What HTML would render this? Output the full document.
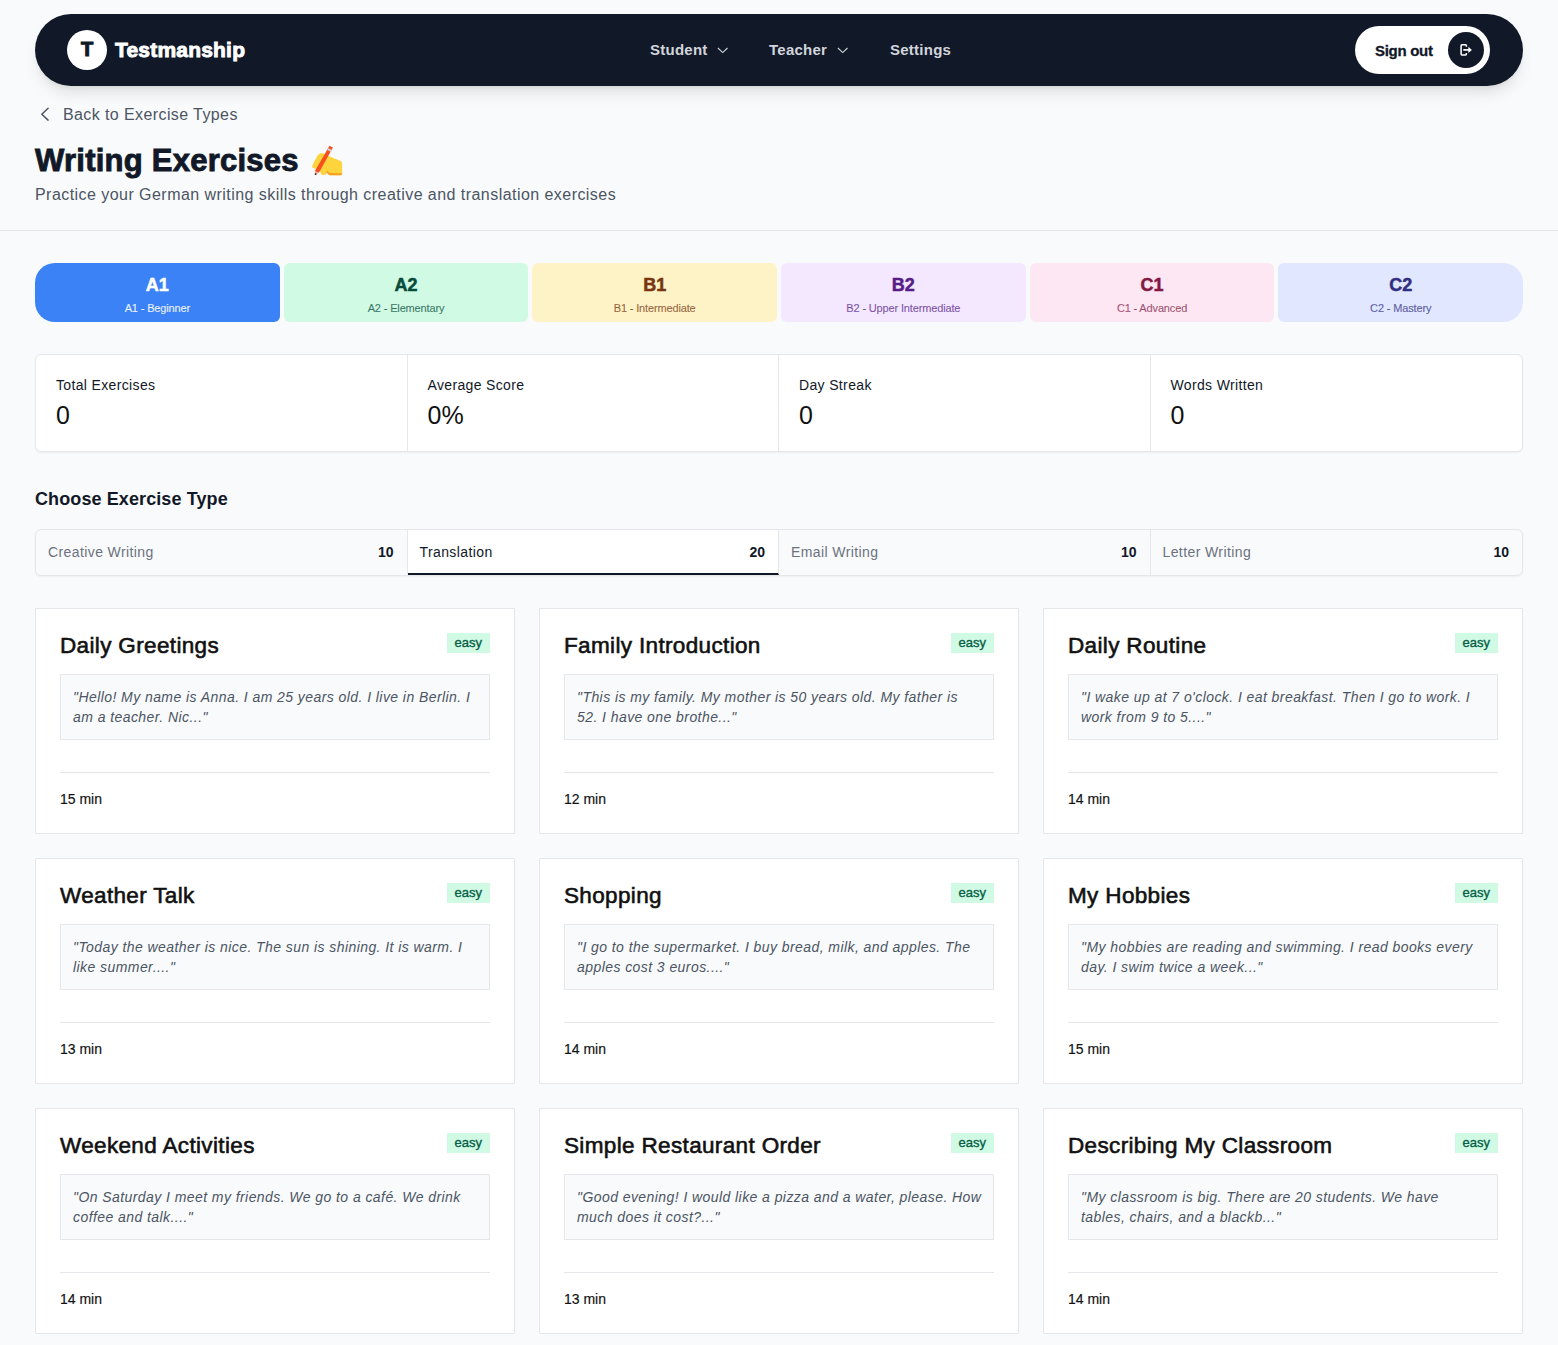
<!DOCTYPE html>
<html>
<head>
<meta charset="utf-8">
<style>
*{box-sizing:border-box;margin:0;padding:0}
html,body{width:1558px;height:1345px;overflow:hidden}
body{background:#f9fafb;font-family:"Liberation Sans",sans-serif;color:#111827;position:relative}
.abs{position:absolute}
/* nav */
.nav{position:absolute;left:35px;top:14px;width:1488px;height:72px;border-radius:36px;background:#111827;box-shadow:0 10px 15px -3px rgba(0,0,0,.1),0 4px 6px -4px rgba(0,0,0,.1)}
.logo{position:absolute;left:32px;top:16px;width:40px;height:40px;border-radius:50%;background:#fff}
.logo span{position:absolute;left:0;top:0;width:40px;line-height:38px;text-align:center;font-weight:700;font-size:20px;color:#111827;-webkit-text-stroke:1.1px #111827}
.brand{position:absolute;left:80px;top:0;line-height:72px;font-size:21px;font-weight:700;color:#fff;-webkit-text-stroke:.9px #fff;letter-spacing:.2px}
.nl{position:absolute;top:0;line-height:72px;font-size:15px;font-weight:700;color:#d1d5db;letter-spacing:.25px}
.chev{position:absolute;top:33px}
.signout{position:absolute;left:1320px;top:12px;width:135px;height:48px;border-radius:24px;background:#fff}
.signout .t{position:absolute;left:20px;top:1px;line-height:48px;font-size:15px;font-weight:700;color:#111827;letter-spacing:-.3px;-webkit-text-stroke:.3px #111827}
.signout .c{position:absolute;left:93px;top:6px;width:36px;height:36px;border-radius:50%;background:#111827}

.back{position:absolute;left:63px;top:105px;font-size:16px;line-height:20px;color:#4b5563;letter-spacing:.4px}
.h1{position:absolute;left:35px;top:141px;font-size:31px;line-height:40px;font-weight:700;color:#111827;letter-spacing:.25px;-webkit-text-stroke:.9px #111827}
.sub{position:absolute;left:35px;top:185px;font-size:16px;line-height:20px;color:#4b5563;letter-spacing:.45px}
.hr{position:absolute;left:0;top:230px;width:1558px;height:1px;background:#e5e7eb}
.lv{position:absolute;top:263px;height:59px;width:244.67px;border-radius:6px;text-align:center}
.lv .a{position:absolute;left:0;right:0;top:11px;font-size:18px;line-height:22px;font-weight:700;-webkit-text-stroke:.5px currentColor}
.lv .b{position:absolute;left:0;right:0;top:301px;font-size:11px;line-height:14px;font-weight:400;letter-spacing:-.15px;-webkit-text-stroke:.2px currentColor}
.stats{position:absolute;left:35px;top:354px;width:1488px;height:98px;background:#fff;border:1px solid #e5e7eb;border-radius:6px;box-shadow:0 1px 2px rgba(0,0,0,.05)}
.st{position:absolute;top:0;height:96px;width:371.5px;border-right:1px solid #e5e7eb}.st:last-child{border-right:0}
.st .l{position:absolute;left:20px;top:22px;font-size:14px;line-height:16px;color:#111827;letter-spacing:.35px}
.st .v{position:absolute;left:20px;top:45px;font-size:25px;line-height:30px;color:#111}
.h2{position:absolute;left:35px;top:488px;font-size:18px;line-height:22px;font-weight:700;color:#111827;letter-spacing:.1px}
.tabs{position:absolute;left:35px;top:529px;width:1488px;height:47px;background:#f9fafb;border:1px solid #e5e7eb;border-radius:6px;overflow:hidden;box-shadow:0 1px 2px rgba(0,0,0,.05)}
.tb{position:absolute;top:0;height:45px;width:371.5px;border-right:1px solid #e5e7eb}.tb:last-child{border-right:0}
.tb .l{position:absolute;left:12px;top:14px;font-size:14px;line-height:16px;color:#6b7280;letter-spacing:.4px}
.tb .n{position:absolute;right:13px;top:14px;font-size:14px;line-height:16px;font-weight:700;color:#111827}
.card{position:absolute;width:480px;height:226px;background:#fff;border:1px solid #e5e7eb}
.card .t{position:absolute;left:24px;top:22px;font-size:22.5px;line-height:29px;font-weight:400;color:#111;letter-spacing:.35px;-webkit-text-stroke:.6px #111}
.card .bd{position:absolute;right:24px;top:24px;height:20px;padding:0 8px;line-height:20px;font-size:13px;color:#065f46;background:#d1fae5;-webkit-text-stroke:.35px #065f46}
.card .q{position:absolute;left:24px;top:65px;width:430px;height:66px;background:#f9fafb;border:1px solid #e5e7eb;padding:12px 12px;font-size:14px;line-height:20px;font-style:italic;color:#4b5563;letter-spacing:.43px;white-space:nowrap}
.card .hrx{position:absolute;left:24px;top:163px;width:430px;height:1px;background:#e5e7eb}
.card .m{position:absolute;left:24px;top:182px;font-size:14px;line-height:16px;color:#111;-webkit-text-stroke:.15px #111}
</style>
</head>
<body>
<div class="nav">
  <div class="logo"><span>T</span></div>
  <div class="brand">Testmanship</div>
  <div class="nl" style="left:615px">Student</div>
  <svg class="chev" style="left:682px" width="12" height="8" viewBox="0 0 12 8"><path d="M0.9 1L5.7 5.6L10.5 1" fill="none" stroke="#d1d5db" stroke-width="1.1"/></svg>
  <div class="nl" style="left:734px">Teacher</div>
  <svg class="chev" style="left:802px" width="12" height="8" viewBox="0 0 12 8"><path d="M0.9 1L5.7 5.6L10.5 1" fill="none" stroke="#d1d5db" stroke-width="1.1"/></svg>
  <div class="nl" style="left:855px">Settings</div>
  <div class="signout"><div class="t">Sign out</div><div class="c"><svg style="position:absolute;left:11px;top:11px" width="14" height="14" viewBox="0 0 14 14"><path d="M7.4 3.8V2.7Q7.4 1.8 6.5 1.8H3Q2.1 1.8 2.1 2.7V11.1Q2.1 12 3 12H6.5Q7.4 12 7.4 11.1V10" fill="none" stroke="#fff" stroke-width="1.55"/><path d="M4.3 6.9H10" stroke="#fff" stroke-width="1.7"/><path d="M9.3 3.8L12.9 6.9L9.3 10Z" fill="#fff"/></svg></div></div>
</div>

<svg class="abs" style="left:38px;top:104px" width="14" height="20" viewBox="0 0 14 20"><path d="M10.1 4.3L3.8 10.2L10.1 16.1" fill="none" stroke="#4b5563" stroke-width="1.5" stroke-linecap="round" stroke-linejoin="round"/></svg>
<div class="back">Back to Exercise Types</div>
<div class="h1">Writing Exercises</div>
<div class="sub">Practice your German writing skills through creative and translation exercises</div>
<svg class="abs" style="left:290px;top:135px" width="70" height="50" viewBox="0 0 70 50">
<path d="M22.3 30.6L27.6 20.6Q29.6 17.6 32.6 18.2L38.6 21L50.6 25.9Q52.1 26.7 52.1 28.6L52.1 38.6Q52.1 40.2 50.3 40.2L40 40.2Q38 40.1 36.9 37L35.6 38.9Q34.3 40.3 32.6 40L31 38.8L29.4 34.3L25.4 33.8Q21.6 33.3 22.3 30.6Z" fill="#FDD43C"/>
<path d="M30.7 37.6Q31.6 40.2 33.2 40.2Q35 40.2 35.6 38.6L37.2 35.4Q38.4 37.6 40.6 37.9L52.1 38.2L52.1 38.9Q52 40.2 50.3 40.2L40 40.2Q38 40.1 37 37.6L35.6 39.2Q34.3 40.4 32.6 40.1Z" fill="#F5A023"/>
<path d="M39.5 10.8L42.9 12.6L29.2 37.3L25.6 39.6L25.2 35.5Z" fill="#F4511E"/>
<path d="M38.3 13.3L42.1 15.3L41.2 16.9L37.4 14.9Z" fill="#CFD8DC"/>
<path d="M25.4 36.2L28.6 37.6L26.6 39.3L25.3 39.5Z" fill="#F8B5A8"/>
<circle cx="25.6" cy="39.1" r="0.9" fill="#111"/>
</svg>
<div class="hr"></div>
<div class="lv" style="left:35.00px;background:#3b82f6;border-radius:20px 6px 6px 20px;"><div class="a" style="color:#fff">A1</div><div class="b" style="top:38px;color:rgba(255,255,255,.85)">A1 - Beginner</div></div>
<div class="lv" style="left:283.67px;background:#d1fae5;"><div class="a" style="color:#064e3b">A2</div><div class="b" style="top:38px;color:rgba(6,78,59,.7)">A2 - Elementary</div></div>
<div class="lv" style="left:532.34px;background:#fef3c7;"><div class="a" style="color:#78350f">B1</div><div class="b" style="top:38px;color:rgba(120,53,15,.7)">B1 - Intermediate</div></div>
<div class="lv" style="left:781.01px;background:#f3e8ff;"><div class="a" style="color:#581c87">B2</div><div class="b" style="top:38px;color:rgba(88,28,135,.7)">B2 - Upper Intermediate</div></div>
<div class="lv" style="left:1029.68px;background:#fce7f3;"><div class="a" style="color:#831843">C1</div><div class="b" style="top:38px;color:rgba(131,24,67,.7)">C1 - Advanced</div></div>
<div class="lv" style="left:1278.35px;background:#e0e7ff;border-radius:6px 20px 20px 6px;"><div class="a" style="color:#312e81">C2</div><div class="b" style="top:38px;color:rgba(49,46,129,.7)">C2 - Mastery</div></div>
<div class="stats">
<div class="st" style="left:0.0px;"><div class="l">Total Exercises</div><div class="v">0</div></div>
<div class="st" style="left:371.5px;"><div class="l">Average Score</div><div class="v">0%</div></div>
<div class="st" style="left:743.0px;"><div class="l">Day Streak</div><div class="v">0</div></div>
<div class="st" style="left:1114.5px;"><div class="l">Words Written</div><div class="v">0</div></div>
</div>
<div class="h2">Choose Exercise Type</div>
<div class="tabs">
<div class="tb" style="left:0px;"><div class="l" style="">Creative Writing</div><div class="n">10</div></div>
<div class="tb" style="left:371.5px;background:#fff;border-bottom:2px solid #111827;"><div class="l" style="color:#111827;">Translation</div><div class="n">20</div></div>
<div class="tb" style="left:743.0px;"><div class="l" style="">Email Writing</div><div class="n">10</div></div>
<div class="tb" style="left:1114.5px;"><div class="l" style="">Letter Writing</div><div class="n">10</div></div>
</div>
<div class="card" style="left:35px;top:608px"><div class="t">Daily Greetings</div><div class="bd">easy</div><div class="q">"Hello! My name is Anna. I am 25 years old. I live in Berlin. I<br>am a teacher. Nic..."</div><div class="hrx"></div><div class="m">15 min</div></div>
<div class="card" style="left:539px;top:608px"><div class="t">Family Introduction</div><div class="bd">easy</div><div class="q">"This is my family. My mother is 50 years old. My father is<br>52. I have one brothe..."</div><div class="hrx"></div><div class="m">12 min</div></div>
<div class="card" style="left:1043px;top:608px"><div class="t">Daily Routine</div><div class="bd">easy</div><div class="q">"I wake up at 7 o'clock. I eat breakfast. Then I go to work. I<br>work from 9 to 5...."</div><div class="hrx"></div><div class="m">14 min</div></div>
<div class="card" style="left:35px;top:858px"><div class="t">Weather Talk</div><div class="bd">easy</div><div class="q">"Today the weather is nice. The sun is shining. It is warm. I<br>like summer...."</div><div class="hrx"></div><div class="m">13 min</div></div>
<div class="card" style="left:539px;top:858px"><div class="t">Shopping</div><div class="bd">easy</div><div class="q">"I go to the supermarket. I buy bread, milk, and apples. The<br>apples cost 3 euros...."</div><div class="hrx"></div><div class="m">14 min</div></div>
<div class="card" style="left:1043px;top:858px"><div class="t">My Hobbies</div><div class="bd">easy</div><div class="q">"My hobbies are reading and swimming. I read books every<br>day. I swim twice a week..."</div><div class="hrx"></div><div class="m">15 min</div></div>
<div class="card" style="left:35px;top:1108px"><div class="t">Weekend Activities</div><div class="bd">easy</div><div class="q">"On Saturday I meet my friends. We go to a café. We drink<br>coffee and talk...."</div><div class="hrx"></div><div class="m">14 min</div></div>
<div class="card" style="left:539px;top:1108px"><div class="t">Simple Restaurant Order</div><div class="bd">easy</div><div class="q">"Good evening! I would like a pizza and a water, please. How<br>much does it cost?..."</div><div class="hrx"></div><div class="m">13 min</div></div>
<div class="card" style="left:1043px;top:1108px"><div class="t">Describing My Classroom</div><div class="bd">easy</div><div class="q">"My classroom is big. There are 20 students. We have<br>tables, chairs, and a blackb..."</div><div class="hrx"></div><div class="m">14 min</div></div>
</body>
</html>
